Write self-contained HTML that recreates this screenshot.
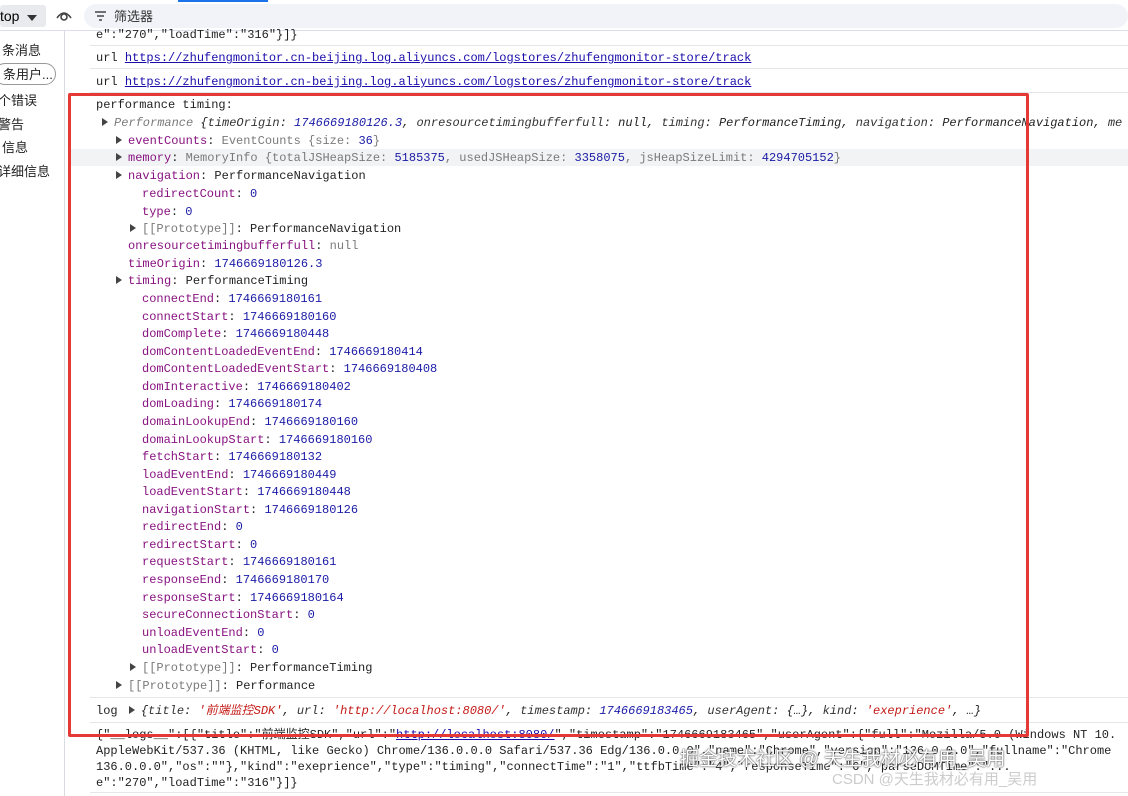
<!DOCTYPE html>
<html><head><meta charset="utf-8"><style>
body{margin:0;width:1128px;height:796px;overflow:hidden;background:#fff;font-family:"Liberation Sans","Noto Sans CJK SC",sans-serif;position:relative}
.top{position:absolute;left:0;top:0;width:1128px;height:30px;background:#fff;border-bottom:1px solid #dde}
.side{position:absolute;left:0;top:31px;width:64px;height:765px;border-right:1px solid #d8dbe0;font-size:13px;color:#222}
.side div{position:absolute;left:2px}
.m{position:absolute;font-family:"Liberation Mono","Noto Sans CJK SC",monospace;font-size:12px;white-space:pre;color:#222;line-height:17px}
.k{color:#881280}.n{color:#1a1aa6}.g{color:#7a7a7a}.s{color:#c41a16}.i{font-style:italic}
.i .k{color:#333}
a{color:#1a0dab;text-decoration:underline}
.sep{position:absolute;left:90px;width:1038px;height:1px;background:#e4e6ea}
.tri{display:inline-block;width:0;height:0;border-left:6px solid #444;border-top:4px solid transparent;border-bottom:4px solid transparent;margin-right:6px}
</style></head><body>
<div class="top">
<div style="position:absolute;left:0;top:5px;width:46px;height:22px;background:#e8eaed;border-radius:3px;font-size:14px;line-height:22px">top <span style="display:inline-block;border-top:6px solid #333;border-left:5px solid transparent;border-right:5px solid transparent;margin-left:4px"></span></div>
<svg style="position:absolute;left:55px;top:8px" width="18" height="14"><path d="M2 10 Q9 0 16 10" fill="none" stroke="#444" stroke-width="1.6"/><circle cx="9" cy="9" r="3" fill="none" stroke="#444" stroke-width="1.6"/></svg>
<div style="position:absolute;left:84px;top:4px;width:1044px;height:24px;background:#f1f3f8;border-radius:12px"></div>
<svg style="position:absolute;left:95px;top:11px" width="12" height="10"><path d="M0 1H11M2 5H9M4 9H7" stroke="#444" stroke-width="1.4"/></svg>
<div style="position:absolute;left:114px;top:6px;font-size:13px;color:#333">筛选器</div>
<div style="position:absolute;left:178px;top:0;width:90px;height:2px;background:#1a73e8"></div>
</div>
<div class="side">
<div style="top:9px">条消息</div>
<div style="top:32px;left:-6px;width:62px;height:22px;border:1px solid #999;border-radius:11px;line-height:22px;padding-left:8px;box-sizing:border-box">条用户...</div>
<div style="top:59px;left:-2px">个错误</div>
<div style="top:83px;left:-2px">警告</div>
<div style="top:106px">信息</div>
<div style="top:130px;left:-2px">详细信息</div>
</div>
<div class="m" style="left:96px;top:27px">e":"270","loadTime":"316"}]}</div>
<div class="sep" style="top:45px"></div>
<div class="m" style="left:96px;top:50px">url <a>https://zhufengmonitor.cn-beijing.log.aliyuncs.com/logstores/zhufengmonitor-store/track</a></div>
<div class="sep" style="top:68px"></div>
<div class="m" style="left:96px;top:74px">url <a>https://zhufengmonitor.cn-beijing.log.aliyuncs.com/logstores/zhufengmonitor-store/track</a></div>
<div class="sep" style="top:92px"></div>
<div style="position:absolute;left:70px;top:149px;width:1058px;height:17px;background:#f1f3f4"></div>
<div class="m" style="left:96px;top:97px">performance timing:</div>
<div class="m" style="left:102px;top:115px"><span class="tri"></span><span class="i g">Performance </span><span class="i">{<span class="k">timeOrigin</span>: <span class="n">1746669180126.3</span>, <span class="k">onresourcetimingbufferfull</span>: null, <span class="k">timing</span>: PerformanceTiming, <span class="k">navigation</span>: PerformanceNavigation, <span class="k">me</span></span></div>
<div class="m" style="left:116px;top:133px"><span class="tri"></span><span class="k">eventCounts</span>: <span class="g">EventCounts {size: <span class="n">36</span>}</span></div>
<div class="m" style="left:116px;top:150px"><span class="tri"></span><span class="k">memory</span>: <span class="g">MemoryInfo {totalJSHeapSize: <span class="n">5185375</span>, usedJSHeapSize: <span class="n">3358075</span>, jsHeapSizeLimit: <span class="n">4294705152</span>}</span></div>
<div class="m" style="left:116px;top:168px"><span class="tri"></span><span class="k">navigation</span>: PerformanceNavigation</div>
<div class="m" style="left:142px;top:186px;line-height:17.5px"><span class="k">redirectCount</span>: <span class="n">0</span>
<span class="k">type</span>: <span class="n">0</span></div>
<div class="m" style="left:130px;top:221px"><span class="tri"></span><span class="g">[[Prototype]]</span>: PerformanceNavigation</div>
<div class="m" style="left:128px;top:238px;line-height:17.5px"><span class="k">onresourcetimingbufferfull</span>: <span class="g">null</span>
<span class="k">timeOrigin</span>: <span class="n">1746669180126.3</span></div>
<div class="m" style="left:116px;top:273px"><span class="tri"></span><span class="k">timing</span>: PerformanceTiming</div>
<div class="m" style="left:142px;top:291px;line-height:17.57px"><span class="k">connectEnd</span>: <span class="n">1746669180161</span>
<span class="k">connectStart</span>: <span class="n">1746669180160</span>
<span class="k">domComplete</span>: <span class="n">1746669180448</span>
<span class="k">domContentLoadedEventEnd</span>: <span class="n">1746669180414</span>
<span class="k">domContentLoadedEventStart</span>: <span class="n">1746669180408</span>
<span class="k">domInteractive</span>: <span class="n">1746669180402</span>
<span class="k">domLoading</span>: <span class="n">1746669180174</span>
<span class="k">domainLookupEnd</span>: <span class="n">1746669180160</span>
<span class="k">domainLookupStart</span>: <span class="n">1746669180160</span>
<span class="k">fetchStart</span>: <span class="n">1746669180132</span>
<span class="k">loadEventEnd</span>: <span class="n">1746669180449</span>
<span class="k">loadEventStart</span>: <span class="n">1746669180448</span>
<span class="k">navigationStart</span>: <span class="n">1746669180126</span>
<span class="k">redirectEnd</span>: <span class="n">0</span>
<span class="k">redirectStart</span>: <span class="n">0</span>
<span class="k">requestStart</span>: <span class="n">1746669180161</span>
<span class="k">responseEnd</span>: <span class="n">1746669180170</span>
<span class="k">responseStart</span>: <span class="n">1746669180164</span>
<span class="k">secureConnectionStart</span>: <span class="n">0</span>
<span class="k">unloadEventEnd</span>: <span class="n">0</span>
<span class="k">unloadEventStart</span>: <span class="n">0</span></div>
<div class="m" style="left:130px;top:660px"><span class="tri"></span><span class="g">[[Prototype]]</span>: PerformanceTiming</div>
<div class="m" style="left:116px;top:678px"><span class="tri"></span><span class="g">[[Prototype]]</span>: Performance</div>
<div class="sep" style="top:697px"></div>
<div class="m" style="left:96px;top:703px">log <span class="tri" style="margin-left:4px"></span><span class="i">{<span class="k">title</span>: <span class="s">'前端监控SDK'</span>, <span class="k">url</span>: <span class="s">'http://localhost:8080/'</span>, <span class="k">timestamp</span>: <span class="n">1746669183465</span>, <span class="k">userAgent</span>: {…}, <span class="k">kind</span>: <span class="s">'exeprience'</span>, …}</span></div>
<div class="sep" style="top:722px"></div>
<div class="m" style="left:96px;top:727px;line-height:16px">{"__logs__":[{"title":"前端监控SDK","url":"<a>http://localhost:8080/</a>","timestamp":"1746669183465","userAgent":{"full":"Mozilla/5.0 (Windows NT 10.
AppleWebKit/537.36 (KHTML, like Gecko) Chrome/136.0.0.0 Safari/537.36 Edg/136.0.0.0","name":"Chrome","version":"136.0.0.0","fullname":"Chrome
136.0.0.0","os":""},"kind":"exeprience","type":"timing","connectTime":"1","ttfbTime":"4","responseTime":"6","parseDOMTime":"...
e":"270","loadTime":"316"}]}</div>
<div class="sep" style="top:792px"></div>
<div style="position:absolute;left:680px;top:744px;font-size:19px;color:#fff;text-shadow:0 0 2px #555,0 0 1px #333">掘金技术社区 @ 天生我材必有用_吴用</div>
<div style="position:absolute;left:832px;top:768px;font-size:15px;color:#ccc">CSDN @天生我材必有用_吴用</div>
<div style="position:absolute;left:68px;top:93px;width:955px;height:638px;border:3px solid #e53935;border-radius:2px"></div>
</body></html>
